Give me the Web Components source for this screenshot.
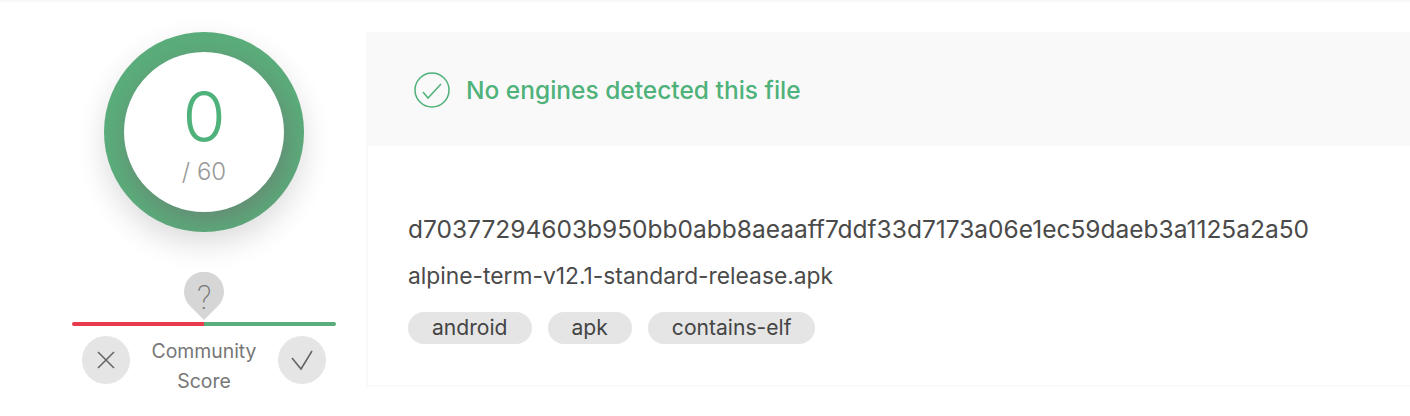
<!DOCTYPE html>
<html>
<head>
<meta charset="utf-8">
<style>
html, body { margin: 0; background: #fff; }
body { font-family: Inter, "Liberation Sans", sans-serif; width: 1410px; height: 416px; overflow: hidden; }
</style>
</head>
<body>
<file-report>
	<score-panel slot="score"></score-panel>
	<detect-card slot="card">
		<file-tag>android</file-tag>
		<file-tag>apk</file-tag>
		<file-tag>contains-elf</file-tag>
	</detect-card>
</file-report>
<script>
(() => {
	function define(name, html) {
		const template = document.createElement("template");
		template.innerHTML = html;
		customElements.define(
			name,
			class extends HTMLElement {
				constructor() {
					super();
					const root = this.attachShadow({ mode: "open" });
					root.append(template.content.cloneNode(true));
				}
			},
		);
	}

	define("file-report", `
<style>
:host {
	box-sizing: border-box;
	display: flex;
	height: 416px;
	padding: 32px 0 29px 72px;
	gap: 30px;
	box-shadow: inset 0 3px 3px -2px rgba(0, 0, 0, 0.05);
}
</style>
<slot name="score"></slot>
<slot name="card"></slot>
`);

	define("score-ring", `
<style>
:host {
	box-sizing: border-box;
	display: block;
	flex: none;
	width: 200px;
	height: 200px;
	padding: 20px;
	border-radius: 50%;
	background: #5aae7b;
	box-shadow: 0 12px 30px rgba(0, 0, 0, 0.14);
}
.clip {
	width: 200px;
	height: 200px;
	margin: -20px;
	padding: 20px;
	box-sizing: border-box;
	border-radius: 50%;
	overflow: hidden;
}
.inner {
	display: flex;
	flex-direction: column;
	align-items: center;
	width: 160px;
	height: 160px;
	border-radius: 50%;
	background: #fff;
	box-shadow: 4px 10px 30px rgba(110, 110, 110, 0.6);
}
.count {
	margin-top: 30px;
	font: 350 70px/70px Inter, sans-serif;
	color: #4fb27a;
}
.total {
	margin-top: 5px;
	font: 300 24px/30px Inter, sans-serif;
	color: #999;
}
</style>
<div class="clip">
	<div class="inner">
		<div class="count">0</div>
		<div class="total">/ 60</div>
	</div>
</div>
`);

	define("vote-button", `
<style>
:host {
	display: flex;
	align-items: center;
	justify-content: center;
	width: 48px;
	height: 48px;
	border-radius: 50%;
	background: #e5e5e5;
}
svg { display: block; }
</style>
<slot></slot>
`);

	define("score-panel", `
<style>
:host {
	display: flex;
	flex-direction: column;
	align-items: center;
	width: 264px;
}
.bar {
	position: relative;
	display: flex;
	flex: none;
	width: 264px;
	height: 4px;
	margin-top: 90px;
}
.bar i { flex: 1; }
.bad { background: #ea3a4e; border-radius: 2px 0 0 2px; }
.good { background: #5aae7b; border-radius: 0 2px 2px 0; }
.pin {
	position: absolute;
	left: 112px;
	top: -50px;
	width: 40px;
	height: 49px;
}
.pin text {
	font: 200 33px Roboto, sans-serif;
}
.row {
	display: flex;
	flex: none;
	align-items: flex-start;
	justify-content: space-between;
	width: 244px;
	margin-top: 10px;
}
.label {
	font: 400 19.400px/30px Inter, sans-serif;
	color: #777;
	text-align: center;
}
</style>
<score-ring></score-ring>
<div class="bar">
	<i class="bad"></i><i class="good"></i>
	<svg class="pin" viewBox="0 0 40 49">
		<path d="M20 48 L6 34 A20 20 0 1 1 34 34 Z" fill="#d6d6d6"/>
		<text x="20" y="37" text-anchor="middle" fill="#777">?</text>
	</svg>
</div>
<div class="row">
	<vote-button>
		<svg width="20" height="20" viewBox="0 0 20 20" fill="none" stroke="#666" stroke-width="1.6"><path d="M2 2 L18 18 M18 2 L2 18"/></svg>
	</vote-button>
	<div class="label">Community<br>Score</div>
	<vote-button>
		<svg width="24" height="24" viewBox="0 0 24 24" fill="none" stroke="#666" stroke-width="1.6"><path d="M2 10 L11 21 L22 3"/></svg>
	</vote-button>
</div>
`);

	define("file-tag", `
<style>
:host {
	display: block;
	height: 32px;
	padding: 0 24px;
	border-radius: 16px;
	background: #e5e5e5;
	font: 400 21.100px/32px Inter, sans-serif;
	color: #444;
}
</style>
<slot></slot>
`);

	define("detect-card", `
<style>
:host {
	box-sizing: border-box;
	display: block;
	width: 1100px;
	height: 355px;
	border: 2px solid #f9f9f9;
	border-right: 0;
}
.head {
	display: flex;
	align-items: center;
	gap: 16px;
	height: 112px;
	padding-left: 46px;
	background: #f9f9f9;
	color: #4fb27a;
	font: 500 24.500px Inter, sans-serif;
}
.body {
	padding: 67px 0 0 40px;
}
.hash {
	font: 400 24.500px/32px Inter, sans-serif;
	color: #4a4a4a;
}
.name {
	margin-top: 17px;
	font: 400 22.800px/28px Inter, sans-serif;
	color: #4a4a4a;
}
.tags {
	display: flex;
	gap: 16px;
	margin-top: 22px;
}
</style>
<div class="head">
	<svg width="36" height="36" viewBox="0 0 36 36" fill="none" stroke="#4fb27a" stroke-width="1.500"><circle cx="18" cy="18" r="17"/><path d="M9 20 L14 26 L27 12"/></svg>
	<span>No engines detected this file</span>
</div>
<div class="body">
	<div class="hash">d70377294603b950bb0abb8aeaaff7ddf33d7173a06e1ec59daeb3a1125a2a50</div>
	<div class="name">alpine-term-v12.1-standard-release.apk</div>
	<div class="tags"><slot></slot></div>
</div>
`);
})();
</script>
</body>
</html>
